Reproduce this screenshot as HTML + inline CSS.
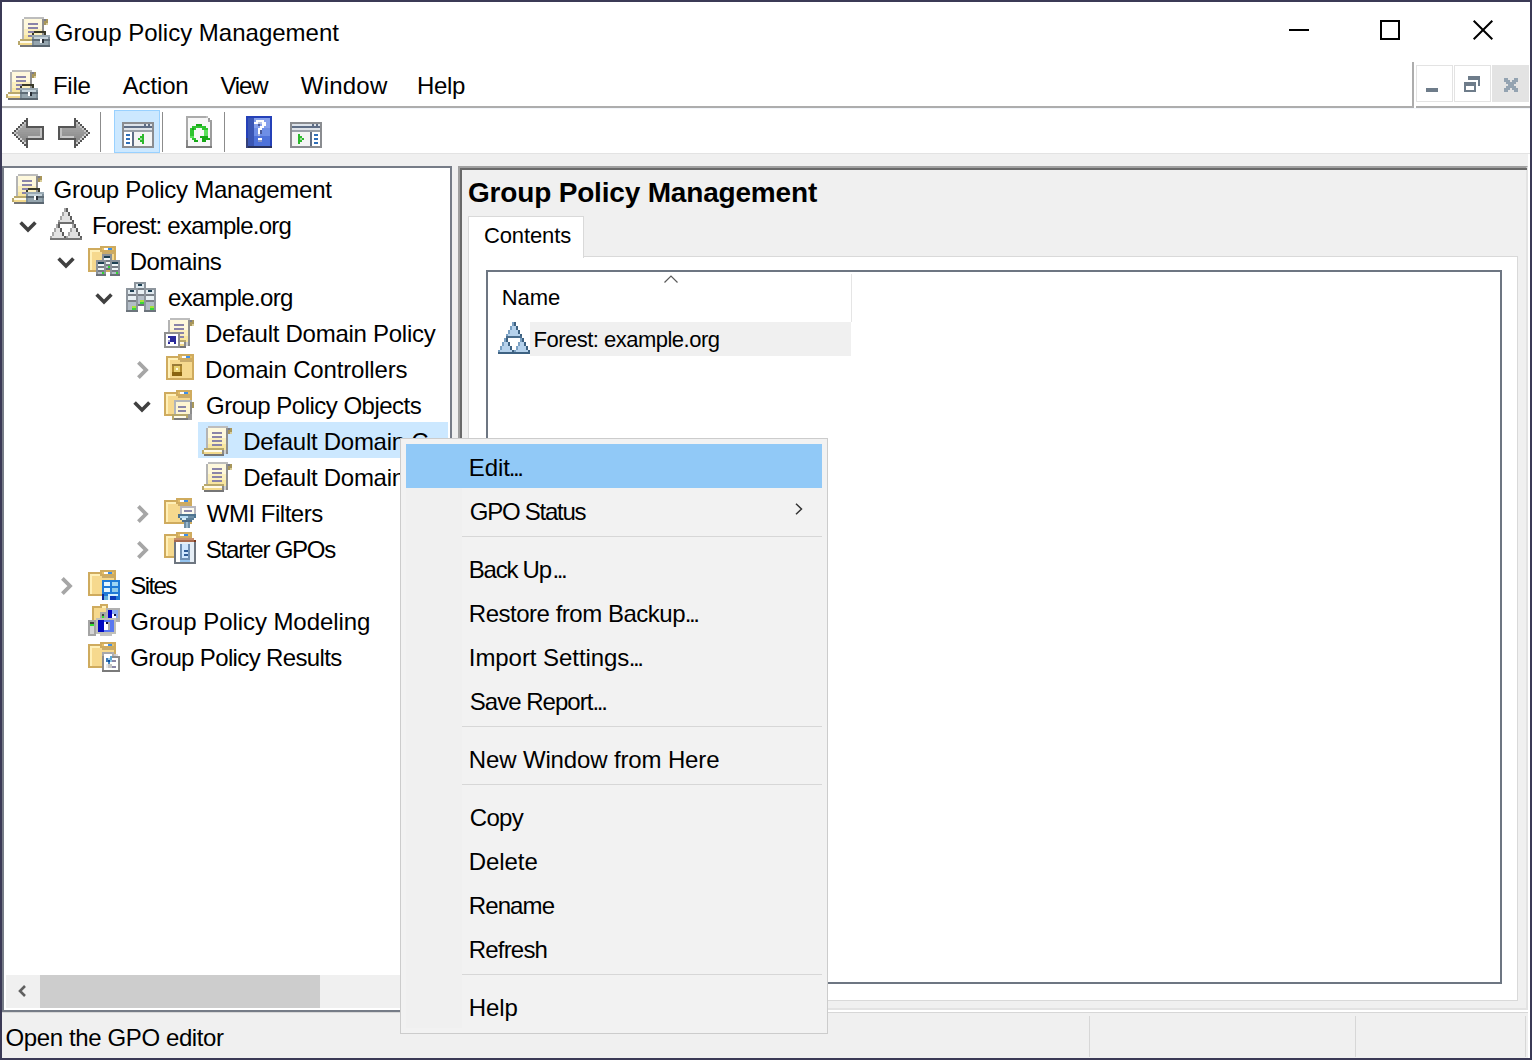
<!DOCTYPE html>
<html><head><meta charset="utf-8">
<style>
*{margin:0;padding:0;box-sizing:border-box}
html,body{width:1532px;height:1060px;overflow:hidden;background:#fff}
body{position:relative;font-family:"Liberation Sans",sans-serif;color:#000}
.a{position:absolute}
.t{position:absolute;font-size:24px;line-height:24px;white-space:nowrap}
svg{position:absolute;overflow:visible}
</style></head><body>

<svg style="left:18px;top:15px" width="32" height="32" viewBox="0 0 16 16" shape-rendering="crispEdges"><rect x="3" y="1" width="10" height="1" fill="#bdbdbd"/><rect x="2" y="2" width="1" height="11" fill="#b4b4b4"/><rect x="3" y="2" width="9" height="11" fill="#fef8dc"/><rect x="3" y="7" width="9" height="6" fill="#fbefbe"/><rect x="3" y="10" width="9" height="3" fill="#f8e6a0"/><rect x="12" y="2" width="1" height="12" fill="#8e8e8e"/><rect x="13" y="2" width="2" height="3" fill="#a8965a"/><rect x="13" y="2" width="1" height="1" fill="#7c7c86"/><rect x="14" y="4" width="1" height="1" fill="#d8cc98"/><rect x="5" y="4" width="5" height="1" fill="#8a84a8"/><rect x="5" y="6" width="5" height="1" fill="#8a84a8"/><rect x="5" y="8" width="5" height="1" fill="#8a84a8"/><rect x="5" y="10" width="5" height="1" fill="#8a84a8"/><rect x="1" y="12" width="10" height="1" fill="#b9a86c"/><rect x="0" y="13" width="1" height="2" fill="#b9a86c"/><rect x="1" y="13" width="9" height="1" fill="#fffbea"/><rect x="1" y="14" width="9" height="1" fill="#f2d98c"/><rect x="10" y="13" width="1" height="2" fill="#8a8a8a"/><rect x="11" y="13" width="1" height="2" fill="#d0d0d0"/><rect x="12" y="14" width="1" height="1" fill="#8a8a8a"/><rect x="1" y="15" width="10" height="1" fill="#767676"/><rect x="8" y="8" width="6" height="1" fill="#3a3a2a"/><rect x="7" y="9" width="1" height="1" fill="#3a3a2a"/><rect x="13" y="9" width="1" height="1" fill="#3a3a2a"/><rect x="7" y="10" width="9" height="6" fill="#7d8d98"/><rect x="7" y="10" width="9" height="1" fill="#9aaab4"/><rect x="8" y="11" width="7" height="1" fill="#c4d2da"/><rect x="7" y="12" width="9" height="1" fill="#5e6c76"/><rect x="8" y="13" width="7" height="2" fill="#95a5ae"/><rect x="11" y="12" width="1" height="2" fill="#ffffff"/><rect x="12" y="12" width="1" height="2" fill="#2a3038"/><rect x="7" y="15" width="9" height="1" fill="#5a6670"/></svg>
<div class="t" style="left:54.8px;top:21px;">Group Policy Management</div>
<div class="a" style="left:1289px;top:29px;width:20px;height:2px;background:#000"></div>
<div class="a" style="left:1380px;top:20px;width:20px;height:20px;border:2px solid #000"></div>
<svg style="left:1473px;top:20px" width="20" height="20" viewBox="0 0 20 20"><path d="M0.7 0.7L19.3 19.3M19.3 0.7L0.7 19.3" stroke="#000" stroke-width="2"/></svg>
<svg style="left:6px;top:68px" width="32" height="32" viewBox="0 0 16 16" shape-rendering="crispEdges"><rect x="3" y="1" width="10" height="1" fill="#bdbdbd"/><rect x="2" y="2" width="1" height="11" fill="#b4b4b4"/><rect x="3" y="2" width="9" height="11" fill="#fef8dc"/><rect x="3" y="7" width="9" height="6" fill="#fbefbe"/><rect x="3" y="10" width="9" height="3" fill="#f8e6a0"/><rect x="12" y="2" width="1" height="12" fill="#8e8e8e"/><rect x="13" y="2" width="2" height="3" fill="#a8965a"/><rect x="13" y="2" width="1" height="1" fill="#7c7c86"/><rect x="14" y="4" width="1" height="1" fill="#d8cc98"/><rect x="5" y="4" width="5" height="1" fill="#8a84a8"/><rect x="5" y="6" width="5" height="1" fill="#8a84a8"/><rect x="5" y="8" width="5" height="1" fill="#8a84a8"/><rect x="5" y="10" width="5" height="1" fill="#8a84a8"/><rect x="1" y="12" width="10" height="1" fill="#b9a86c"/><rect x="0" y="13" width="1" height="2" fill="#b9a86c"/><rect x="1" y="13" width="9" height="1" fill="#fffbea"/><rect x="1" y="14" width="9" height="1" fill="#f2d98c"/><rect x="10" y="13" width="1" height="2" fill="#8a8a8a"/><rect x="11" y="13" width="1" height="2" fill="#d0d0d0"/><rect x="12" y="14" width="1" height="1" fill="#8a8a8a"/><rect x="1" y="15" width="10" height="1" fill="#767676"/><rect x="8" y="8" width="6" height="1" fill="#3a3a2a"/><rect x="7" y="9" width="1" height="1" fill="#3a3a2a"/><rect x="13" y="9" width="1" height="1" fill="#3a3a2a"/><rect x="7" y="10" width="9" height="6" fill="#7d8d98"/><rect x="7" y="10" width="9" height="1" fill="#9aaab4"/><rect x="8" y="11" width="7" height="1" fill="#c4d2da"/><rect x="7" y="12" width="9" height="1" fill="#5e6c76"/><rect x="8" y="13" width="7" height="2" fill="#95a5ae"/><rect x="11" y="12" width="1" height="2" fill="#ffffff"/><rect x="12" y="12" width="1" height="2" fill="#2a3038"/><rect x="7" y="15" width="9" height="1" fill="#5a6670"/></svg>
<div class="t" style="left:52.9px;top:74px;letter-spacing:-0.2px;">File</div>
<div class="t" style="left:122.7px;top:74px;letter-spacing:-0.14px;">Action</div>
<div class="t" style="left:220.4px;top:74px;letter-spacing:-1.17px;">View</div>
<div class="t" style="left:300.8px;top:74px;letter-spacing:0.22px;">Window</div>
<div class="t" style="left:417.1px;top:74px;letter-spacing:-0.37px;">Help</div>
<div class="a" style="left:2px;top:106px;width:1412px;height:2px;background:#adadad"></div>
<div class="a" style="left:1412px;top:62px;width:2px;height:46px;background:#adadad"></div>
<div class="a" style="left:1416px;top:106px;width:1114px;height:2px;background:#adadad"></div>
<div class="a" style="left:2px;top:108px;width:1528px;height:1px;background:#f3f6fb"></div>
<div class="a" style="left:1416px;top:65px;width:37px;height:37px;border:1px solid #e3e3e3"></div>
<div class="a" style="left:1426px;top:88px;width:12px;height:4px;background:#6e7c8a"></div>
<div class="a" style="left:1454px;top:65px;width:37px;height:37px;border:1px solid #e3e3e3"></div>
<div class="a" style="left:1468px;top:76px;width:12px;height:10px;border-top:4px solid #6e7c8a;border-right:2px solid #6e7c8a"></div>
<div class="a" style="left:1464px;top:82px;width:12px;height:10px;border:2px solid #6e7c8a;border-top-width:4px;background:#fff"></div>
<div class="a" style="left:1492px;top:65px;width:37px;height:37px;background:#e3e3e3"></div>
<svg style="left:1504px;top:78px" width="14" height="14" viewBox="0 0 14 14" shape-rendering="crispEdges"><g fill="#94a3b1"><rect x="0" y="0" width="4" height="4"/><rect x="10" y="0" width="4" height="4"/><rect x="0" y="10" width="4" height="4"/><rect x="10" y="10" width="4" height="4"/><rect x="2" y="2" width="4" height="4"/><rect x="8" y="2" width="4" height="4"/><rect x="2" y="8" width="4" height="4"/><rect x="8" y="8" width="4" height="4"/><rect x="4" y="4" width="6" height="6"/></g></svg>
<div class="a" style="left:2px;top:153px;width:1528px;height:1px;background:#e3e3e3"></div>
<div class="a" style="left:2px;top:154px;width:1528px;height:904px;background:#f0f0f0"></div>
<div class="a" style="left:114px;top:110px;width:46px;height:43px;background:#cce8ff;border:1px solid #99d1ff"></div>
<div class="a" style="left:100px;top:112px;width:1px;height:40px;background:#8c8c8c"></div>
<div class="a" style="left:162px;top:112px;width:1px;height:40px;background:#8c8c8c"></div>
<div class="a" style="left:224px;top:112px;width:1px;height:40px;background:#8c8c8c"></div>
<svg style="left:12px;top:118px" width="32" height="30" viewBox="0 0 16 15" shape-rendering="crispEdges"><rect x="7" y="0" width="1" height="1" fill="#b4b4b4"/><rect x="7" y="0" width="1" height="1" fill="#555555"/><rect x="6" y="1" width="2" height="1" fill="#b0b0b0"/><rect x="6" y="1" width="1" height="1" fill="#555555"/><rect x="7" y="1" width="1" height="1" fill="#c4c4c4"/><rect x="5" y="2" width="3" height="1" fill="#acacac"/><rect x="5" y="2" width="1" height="1" fill="#555555"/><rect x="6" y="2" width="1" height="1" fill="#c4c4c4"/><rect x="4" y="3" width="4" height="1" fill="#a8a8a8"/><rect x="4" y="3" width="1" height="1" fill="#555555"/><rect x="5" y="3" width="1" height="1" fill="#c4c4c4"/><rect x="3" y="4" width="13" height="1" fill="#a4a4a4"/><rect x="3" y="4" width="1" height="1" fill="#555555"/><rect x="4" y="4" width="1" height="1" fill="#c4c4c4"/><rect x="2" y="5" width="14" height="1" fill="#a0a0a0"/><rect x="2" y="5" width="1" height="1" fill="#555555"/><rect x="3" y="5" width="1" height="1" fill="#c4c4c4"/><rect x="1" y="6" width="15" height="1" fill="#9c9c9c"/><rect x="1" y="6" width="1" height="1" fill="#555555"/><rect x="2" y="6" width="1" height="1" fill="#c4c4c4"/><rect x="0" y="7" width="16" height="1" fill="#989898"/><rect x="0" y="7" width="1" height="1" fill="#555555"/><rect x="1" y="7" width="1" height="1" fill="#c4c4c4"/><rect x="1" y="8" width="15" height="1" fill="#949494"/><rect x="1" y="8" width="1" height="1" fill="#555555"/><rect x="2" y="8" width="1" height="1" fill="#d0d0d0"/><rect x="2" y="9" width="14" height="1" fill="#909090"/><rect x="2" y="9" width="1" height="1" fill="#555555"/><rect x="3" y="9" width="1" height="1" fill="#d0d0d0"/><rect x="3" y="10" width="13" height="1" fill="#8c8c8c"/><rect x="3" y="10" width="1" height="1" fill="#555555"/><rect x="4" y="10" width="1" height="1" fill="#d0d0d0"/><rect x="4" y="11" width="4" height="1" fill="#888888"/><rect x="4" y="11" width="1" height="1" fill="#555555"/><rect x="5" y="11" width="1" height="1" fill="#d0d0d0"/><rect x="5" y="12" width="3" height="1" fill="#848484"/><rect x="5" y="12" width="1" height="1" fill="#555555"/><rect x="6" y="12" width="1" height="1" fill="#d0d0d0"/><rect x="6" y="13" width="2" height="1" fill="#808080"/><rect x="6" y="13" width="1" height="1" fill="#555555"/><rect x="7" y="13" width="1" height="1" fill="#d0d0d0"/><rect x="7" y="14" width="1" height="1" fill="#7c7c7c"/><rect x="7" y="14" width="1" height="1" fill="#555555"/><rect x="7" y="0" width="1" height="1" fill="#555555"/><rect x="7" y="1" width="1" height="1" fill="#555555"/><rect x="7" y="2" width="1" height="1" fill="#555555"/><rect x="7" y="3" width="1" height="1" fill="#555555"/><rect x="7" y="4" width="1" height="1" fill="#555555"/><rect x="7" y="10" width="1" height="1" fill="#555555"/><rect x="7" y="11" width="1" height="1" fill="#555555"/><rect x="7" y="12" width="1" height="1" fill="#555555"/><rect x="7" y="13" width="1" height="1" fill="#555555"/><rect x="7" y="14" width="1" height="1" fill="#555555"/><rect x="8" y="4" width="8" height="1" fill="#555555"/><rect x="8" y="10" width="8" height="1" fill="#555555"/><rect x="15" y="4" width="1" height="7" fill="#555555"/><rect x="8" y="9" width="7" height="1" fill="#c8c8c8"/><rect x="14" y="5" width="1" height="5" fill="#c0c0c0"/></svg><svg style="left:58px;top:118px" width="32" height="30" viewBox="0 0 16 15" shape-rendering="crispEdges"><rect x="8" y="0" width="1" height="1" fill="#b4b4b4"/><rect x="8" y="0" width="1" height="1" fill="#555555"/><rect x="8" y="1" width="2" height="1" fill="#b0b0b0"/><rect x="9" y="1" width="1" height="1" fill="#555555"/><rect x="8" y="1" width="1" height="1" fill="#c4c4c4"/><rect x="8" y="2" width="3" height="1" fill="#acacac"/><rect x="10" y="2" width="1" height="1" fill="#555555"/><rect x="9" y="2" width="1" height="1" fill="#c4c4c4"/><rect x="8" y="3" width="4" height="1" fill="#a8a8a8"/><rect x="11" y="3" width="1" height="1" fill="#555555"/><rect x="10" y="3" width="1" height="1" fill="#c4c4c4"/><rect x="0" y="4" width="13" height="1" fill="#a4a4a4"/><rect x="12" y="4" width="1" height="1" fill="#555555"/><rect x="11" y="4" width="1" height="1" fill="#c4c4c4"/><rect x="0" y="5" width="14" height="1" fill="#a0a0a0"/><rect x="13" y="5" width="1" height="1" fill="#555555"/><rect x="12" y="5" width="1" height="1" fill="#c4c4c4"/><rect x="0" y="6" width="15" height="1" fill="#9c9c9c"/><rect x="14" y="6" width="1" height="1" fill="#555555"/><rect x="13" y="6" width="1" height="1" fill="#c4c4c4"/><rect x="0" y="7" width="16" height="1" fill="#989898"/><rect x="15" y="7" width="1" height="1" fill="#555555"/><rect x="14" y="7" width="1" height="1" fill="#c4c4c4"/><rect x="0" y="8" width="15" height="1" fill="#949494"/><rect x="14" y="8" width="1" height="1" fill="#555555"/><rect x="13" y="8" width="1" height="1" fill="#d0d0d0"/><rect x="0" y="9" width="14" height="1" fill="#909090"/><rect x="13" y="9" width="1" height="1" fill="#555555"/><rect x="12" y="9" width="1" height="1" fill="#d0d0d0"/><rect x="0" y="10" width="13" height="1" fill="#8c8c8c"/><rect x="12" y="10" width="1" height="1" fill="#555555"/><rect x="11" y="10" width="1" height="1" fill="#d0d0d0"/><rect x="8" y="11" width="4" height="1" fill="#888888"/><rect x="11" y="11" width="1" height="1" fill="#555555"/><rect x="10" y="11" width="1" height="1" fill="#d0d0d0"/><rect x="8" y="12" width="3" height="1" fill="#848484"/><rect x="10" y="12" width="1" height="1" fill="#555555"/><rect x="9" y="12" width="1" height="1" fill="#d0d0d0"/><rect x="8" y="13" width="2" height="1" fill="#808080"/><rect x="9" y="13" width="1" height="1" fill="#555555"/><rect x="8" y="13" width="1" height="1" fill="#d0d0d0"/><rect x="8" y="14" width="1" height="1" fill="#7c7c7c"/><rect x="8" y="14" width="1" height="1" fill="#555555"/><rect x="8" y="0" width="1" height="1" fill="#555555"/><rect x="8" y="1" width="1" height="1" fill="#555555"/><rect x="8" y="2" width="1" height="1" fill="#555555"/><rect x="8" y="3" width="1" height="1" fill="#555555"/><rect x="8" y="4" width="1" height="1" fill="#555555"/><rect x="8" y="10" width="1" height="1" fill="#555555"/><rect x="8" y="11" width="1" height="1" fill="#555555"/><rect x="8" y="12" width="1" height="1" fill="#555555"/><rect x="8" y="13" width="1" height="1" fill="#555555"/><rect x="8" y="14" width="1" height="1" fill="#555555"/><rect x="0" y="4" width="8" height="1" fill="#555555"/><rect x="0" y="10" width="8" height="1" fill="#555555"/><rect x="0" y="4" width="1" height="7" fill="#555555"/><rect x="1" y="9" width="7" height="1" fill="#c8c8c8"/><rect x="1" y="5" width="1" height="5" fill="#c0c0c0"/></svg><svg style="left:122px;top:122px" width="32" height="26" viewBox="0 0 16 13" shape-rendering="crispEdges"><rect x="0" y="0" width="16" height="13" fill="#8a8c90"/><rect x="1" y="1" width="14" height="11" fill="#f4f4f4"/><rect x="1" y="1" width="14" height="1" fill="#dde3ea"/><rect x="1" y="2" width="14" height="1" fill="#5f6e86"/><rect x="1" y="3" width="14" height="1" fill="#dfe3e8"/><rect x="1" y="4" width="14" height="1" fill="#9aa0a8"/><rect x="11" y="1" width="1" height="1" fill="#5f6e86"/><rect x="13" y="1" width="1" height="1" fill="#5f6e86"/><rect x="1" y="5" width="5" height="7" fill="#ffffff"/><rect x="5" y="5" width="1" height="7" fill="#5f6e86"/><rect x="2" y="6" width="2" height="1" fill="#2f6fb8"/><rect x="2" y="8" width="2" height="1" fill="#2f6fb8"/><rect x="2" y="10" width="2" height="1" fill="#2f6fb8"/><rect x="10" y="6" width="1" height="5" fill="#2cb82c"/><rect x="9" y="7" width="1" height="3" fill="#2cb82c"/><rect x="8" y="8" width="1" height="1" fill="#2cb82c"/><rect x="9" y="8" width="1" height="1" fill="#9ae09a"/></svg><svg style="left:186px;top:116px" width="26" height="32" viewBox="0 0 13 16" shape-rendering="crispEdges"><rect x="0" y="0" width="13" height="16" fill="#ababab"/><rect x="1" y="1" width="11" height="14" fill="#f7f7f7"/><rect x="11" y="0" width="2" height="3" fill="#ffffff"/><rect x="10" y="0" width="1" height="1" fill="#c0c0c0"/><rect x="11" y="1" width="1" height="1" fill="#9a9a9a"/><rect x="11" y="2" width="2" height="1" fill="#a0a0a0"/><rect x="12" y="3" width="1" height="12" fill="#9c9c9c"/><rect x="0" y="12" width="1" height="4" fill="#8a8a8a"/><rect x="0" y="15" width="13" height="1" fill="#7a7a7a"/><rect x="5" y="4" width="3" height="1" fill="#16a816"/><rect x="3" y="5" width="7" height="1" fill="#2fc42f"/><rect x="2" y="6" width="3" height="1" fill="#2fc42f"/><rect x="8" y="6" width="3" height="1" fill="#2fc42f"/><rect x="3" y="6" width="1" height="1" fill="#16a816"/><rect x="2" y="7" width="2" height="3" fill="#2fc42f"/><rect x="9" y="7" width="2" height="3" fill="#5ae05a"/><rect x="2" y="10" width="2" height="1" fill="#5ae05a"/><rect x="7" y="10" width="4" height="1" fill="#16a816"/><rect x="3" y="11" width="2" height="1" fill="#2fc42f"/><rect x="8" y="11" width="4" height="1" fill="#16a816"/><rect x="4" y="12" width="2" height="1" fill="#16a816"/><rect x="8" y="12" width="2" height="1" fill="#16a816"/></svg><svg style="left:246px;top:116px" width="26" height="32" viewBox="0 0 13 16" shape-rendering="crispEdges"><rect x="0" y="0" width="13" height="16" fill="#2440b8"/><rect x="1" y="1" width="3" height="14" fill="#3a56b4"/><rect x="4" y="1" width="8" height="14" fill="#6e8ee6"/><rect x="4" y="1" width="8" height="5" fill="#86a0ec"/><rect x="4" y="10" width="8" height="5" fill="#4e72da"/><rect x="0" y="15" width="13" height="1" fill="#28325e"/><rect x="0" y="11" width="1" height="5" fill="#34407a"/><rect x="5" y="2" width="4" height="1" fill="#ffffff"/><rect x="4" y="3" width="2" height="1" fill="#ffffff"/><rect x="8" y="3" width="2" height="1" fill="#ffffff"/><rect x="8" y="4" width="2" height="1" fill="#ffffff"/><rect x="6" y="3" width="2" height="1" fill="#b8c4e8"/><rect x="6" y="4" width="1" height="1" fill="#4a5a9a"/><rect x="7" y="5" width="2" height="1" fill="#ffffff"/><rect x="6" y="6" width="2" height="1" fill="#ffffff"/><rect x="6" y="7" width="1" height="2" fill="#ffffff"/><rect x="7" y="7" width="1" height="2" fill="#4a5a9a"/><rect x="6" y="9" width="1" height="1" fill="#aab4d8"/><rect x="6" y="11" width="2" height="1" fill="#ffffff"/><rect x="6" y="12" width="2" height="1" fill="#8a96c4"/></svg><svg style="left:290px;top:122px" width="32" height="26" viewBox="0 0 16 13" shape-rendering="crispEdges"><rect x="0" y="0" width="16" height="13" fill="#8a8c90"/><rect x="1" y="1" width="14" height="11" fill="#f4f4f4"/><rect x="1" y="1" width="14" height="1" fill="#dde3ea"/><rect x="1" y="2" width="14" height="1" fill="#5f6e86"/><rect x="1" y="3" width="14" height="1" fill="#dfe3e8"/><rect x="1" y="4" width="14" height="1" fill="#9aa0a8"/><rect x="11" y="1" width="1" height="1" fill="#5f6e86"/><rect x="13" y="1" width="1" height="1" fill="#5f6e86"/><rect x="10" y="5" width="5" height="7" fill="#ffffff"/><rect x="10" y="5" width="1" height="7" fill="#5f6e86"/><rect x="12" y="6" width="2" height="1" fill="#2f6fb8"/><rect x="12" y="8" width="2" height="1" fill="#2f6fb8"/><rect x="12" y="10" width="2" height="1" fill="#2f6fb8"/><rect x="4" y="6" width="1" height="5" fill="#2cb82c"/><rect x="5" y="7" width="1" height="3" fill="#2cb82c"/><rect x="6" y="8" width="1" height="1" fill="#2cb82c"/><rect x="5" y="8" width="1" height="1" fill="#9ae09a"/></svg>
<div class="a" style="left:2px;top:166px;width:450px;height:846px;background:#fff;border:2px solid #767c87"></div>
<div class="a" style="left:198px;top:422px;width:250px;height:36px;background:#cce8ff"></div>
<div class="a" style="left:4px;top:168px;width:446px;height:806px;overflow:hidden">
<svg style="left:8px;top:4px" width="32" height="32" viewBox="0 0 16 16" shape-rendering="crispEdges"><rect x="3" y="1" width="10" height="1" fill="#bdbdbd"/><rect x="2" y="2" width="1" height="11" fill="#b4b4b4"/><rect x="3" y="2" width="9" height="11" fill="#fef8dc"/><rect x="3" y="7" width="9" height="6" fill="#fbefbe"/><rect x="3" y="10" width="9" height="3" fill="#f8e6a0"/><rect x="12" y="2" width="1" height="12" fill="#8e8e8e"/><rect x="13" y="2" width="2" height="3" fill="#a8965a"/><rect x="13" y="2" width="1" height="1" fill="#7c7c86"/><rect x="14" y="4" width="1" height="1" fill="#d8cc98"/><rect x="5" y="4" width="5" height="1" fill="#8a84a8"/><rect x="5" y="6" width="5" height="1" fill="#8a84a8"/><rect x="5" y="8" width="5" height="1" fill="#8a84a8"/><rect x="5" y="10" width="5" height="1" fill="#8a84a8"/><rect x="1" y="12" width="10" height="1" fill="#b9a86c"/><rect x="0" y="13" width="1" height="2" fill="#b9a86c"/><rect x="1" y="13" width="9" height="1" fill="#fffbea"/><rect x="1" y="14" width="9" height="1" fill="#f2d98c"/><rect x="10" y="13" width="1" height="2" fill="#8a8a8a"/><rect x="11" y="13" width="1" height="2" fill="#d0d0d0"/><rect x="12" y="14" width="1" height="1" fill="#8a8a8a"/><rect x="1" y="15" width="10" height="1" fill="#767676"/><rect x="8" y="8" width="6" height="1" fill="#3a3a2a"/><rect x="7" y="9" width="1" height="1" fill="#3a3a2a"/><rect x="13" y="9" width="1" height="1" fill="#3a3a2a"/><rect x="7" y="10" width="9" height="6" fill="#7d8d98"/><rect x="7" y="10" width="9" height="1" fill="#9aaab4"/><rect x="8" y="11" width="7" height="1" fill="#c4d2da"/><rect x="7" y="12" width="9" height="1" fill="#5e6c76"/><rect x="8" y="13" width="7" height="2" fill="#95a5ae"/><rect x="11" y="12" width="1" height="2" fill="#ffffff"/><rect x="12" y="12" width="1" height="2" fill="#2a3038"/><rect x="7" y="15" width="9" height="1" fill="#5a6670"/></svg>
<div class="t" style="left:49.5px;top:10px;letter-spacing:-0.26px">Group Policy Management</div>
<svg style="left:46px;top:40px" width="32" height="32" viewBox="0 0 16 16" shape-rendering="crispEdges"><rect x="7" y="0" width="2" height="1" fill="#e2e2e2"/><rect x="7" y="0" width="1" height="1" fill="#a6a6a6"/><rect x="8" y="0" width="1" height="1" fill="#5e5e5e"/><rect x="7" y="1" width="2" height="1" fill="#e2e2e2"/><rect x="7" y="1" width="1" height="1" fill="#a6a6a6"/><rect x="8" y="1" width="1" height="1" fill="#5e5e5e"/><rect x="6" y="2" width="4" height="1" fill="#e2e2e2"/><rect x="6" y="2" width="1" height="1" fill="#a6a6a6"/><rect x="9" y="2" width="1" height="1" fill="#5e5e5e"/><rect x="6" y="3" width="4" height="1" fill="#e2e2e2"/><rect x="6" y="3" width="1" height="1" fill="#a6a6a6"/><rect x="9" y="3" width="1" height="1" fill="#5e5e5e"/><rect x="5" y="4" width="6" height="1" fill="#e2e2e2"/><rect x="5" y="4" width="1" height="1" fill="#a6a6a6"/><rect x="10" y="4" width="1" height="1" fill="#5e5e5e"/><rect x="5" y="5" width="6" height="1" fill="#e2e2e2"/><rect x="5" y="5" width="1" height="1" fill="#a6a6a6"/><rect x="10" y="5" width="1" height="1" fill="#5e5e5e"/><rect x="4" y="6" width="8" height="1" fill="#e2e2e2"/><rect x="4" y="6" width="1" height="1" fill="#a6a6a6"/><rect x="11" y="6" width="1" height="1" fill="#5e5e5e"/><rect x="4" y="7" width="8" height="1" fill="#e2e2e2"/><rect x="4" y="7" width="1" height="1" fill="#a6a6a6"/><rect x="11" y="7" width="1" height="1" fill="#5e5e5e"/><rect x="3" y="8" width="10" height="1" fill="#e2e2e2"/><rect x="3" y="8" width="1" height="1" fill="#a6a6a6"/><rect x="12" y="8" width="1" height="1" fill="#5e5e5e"/><rect x="3" y="9" width="10" height="1" fill="#e2e2e2"/><rect x="3" y="9" width="1" height="1" fill="#a6a6a6"/><rect x="12" y="9" width="1" height="1" fill="#5e5e5e"/><rect x="2" y="10" width="12" height="1" fill="#e2e2e2"/><rect x="2" y="10" width="1" height="1" fill="#a6a6a6"/><rect x="13" y="10" width="1" height="1" fill="#5e5e5e"/><rect x="2" y="11" width="12" height="1" fill="#e2e2e2"/><rect x="2" y="11" width="1" height="1" fill="#a6a6a6"/><rect x="13" y="11" width="1" height="1" fill="#5e5e5e"/><rect x="1" y="12" width="14" height="1" fill="#e2e2e2"/><rect x="1" y="12" width="1" height="1" fill="#a6a6a6"/><rect x="14" y="12" width="1" height="1" fill="#5e5e5e"/><rect x="1" y="13" width="14" height="1" fill="#e2e2e2"/><rect x="1" y="13" width="1" height="1" fill="#a6a6a6"/><rect x="14" y="13" width="1" height="1" fill="#5e5e5e"/><rect x="0" y="14" width="16" height="1" fill="#e2e2e2"/><rect x="0" y="14" width="1" height="1" fill="#a6a6a6"/><rect x="15" y="14" width="1" height="1" fill="#5e5e5e"/><rect x="0" y="15" width="16" height="1" fill="#e2e2e2"/><rect x="0" y="15" width="1" height="1" fill="#a6a6a6"/><rect x="15" y="15" width="1" height="1" fill="#5e5e5e"/><rect x="4" y="7" width="8" height="1" fill="#6e6e6e"/><rect x="5" y="8" width="6" height="1" fill="#ffffff"/><rect x="5" y="9" width="6" height="1" fill="#ffffff"/><rect x="6" y="10" width="4" height="1" fill="#ffffff"/><rect x="6" y="11" width="4" height="1" fill="#ffffff"/><rect x="7" y="12" width="2" height="1" fill="#ffffff"/><rect x="7" y="13" width="2" height="1" fill="#ffffff"/><rect x="4" y="8" width="1" height="1" fill="#5e5e5e"/><rect x="11" y="8" width="1" height="1" fill="#a6a6a6"/><rect x="4" y="9" width="1" height="1" fill="#5e5e5e"/><rect x="11" y="9" width="1" height="1" fill="#a6a6a6"/><rect x="5" y="10" width="1" height="1" fill="#5e5e5e"/><rect x="10" y="10" width="1" height="1" fill="#a6a6a6"/><rect x="5" y="11" width="1" height="1" fill="#5e5e5e"/><rect x="10" y="11" width="1" height="1" fill="#a6a6a6"/><rect x="6" y="12" width="1" height="1" fill="#5e5e5e"/><rect x="9" y="12" width="1" height="1" fill="#a6a6a6"/><rect x="6" y="13" width="1" height="1" fill="#5e5e5e"/><rect x="9" y="13" width="1" height="1" fill="#a6a6a6"/><rect x="7" y="14" width="1" height="1" fill="#5e5e5e"/><rect x="8" y="14" width="1" height="1" fill="#a6a6a6"/><rect x="0" y="15" width="16" height="1" fill="#767676"/></svg>
<svg style="left:15px;top:52.69999999999999px" width="18" height="11" viewBox="0 0 18 11"><path d="M1.6 1.6L9 9L16.4 1.6" fill="none" stroke="#404040" stroke-width="3.6"/></svg>
<div class="t" style="left:88.1px;top:46px;letter-spacing:-0.76px">Forest: example.org</div>
<svg style="left:84px;top:76px" width="32" height="32" viewBox="0 0 16 16" shape-rendering="crispEdges"><rect x="0" y="2" width="14" height="12" fill="#cfab5e"/><rect x="1" y="3" width="12" height="10" fill="#f6d98e"/><rect x="1" y="3" width="1" height="10" fill="#fff0b8"/><rect x="1" y="3" width="5" height="1" fill="#fff0b8"/><rect x="6" y="1" width="8" height="3" fill="#cfab5e"/><rect x="7" y="2" width="6" height="1" fill="#e6c06a"/><rect x="8" y="2" width="2" height="1" fill="#ffffff"/><rect x="10" y="2" width="2" height="1" fill="#3d8ee8"/><rect x="7" y="4" width="6" height="1" fill="#c9ab6a"/><rect x="7" y="5" width="5" height="8" fill="#8a929a"/><rect x="8" y="6" width="3" height="6" fill="#c4ccd4"/><rect x="8" y="6" width="3" height="1" fill="#1d4052"/><rect x="8" y="7" width="3" height="1" fill="#f0f6f8"/><rect x="8" y="8" width="3" height="1" fill="#767c84"/><rect x="8" y="9" width="3" height="1" fill="#eef4f6"/><rect x="8" y="10" width="3" height="1" fill="#767c84"/><rect x="8" y="11" width="3" height="1" fill="#b4bec8"/><rect x="10" y="11" width="1" height="1" fill="#30d830"/><rect x="7" y="12" width="5" height="1" fill="#6a7078"/><rect x="4" y="8" width="5" height="8" fill="#8a929a"/><rect x="5" y="9" width="3" height="6" fill="#c4ccd4"/><rect x="5" y="9" width="3" height="1" fill="#1d4052"/><rect x="5" y="10" width="3" height="1" fill="#f0f6f8"/><rect x="5" y="11" width="3" height="1" fill="#767c84"/><rect x="5" y="12" width="3" height="1" fill="#eef4f6"/><rect x="5" y="13" width="3" height="1" fill="#767c84"/><rect x="5" y="14" width="3" height="1" fill="#b4bec8"/><rect x="7" y="14" width="1" height="1" fill="#30d830"/><rect x="4" y="15" width="5" height="1" fill="#6a7078"/><rect x="11" y="8" width="5" height="8" fill="#8a929a"/><rect x="12" y="9" width="3" height="6" fill="#c4ccd4"/><rect x="12" y="9" width="3" height="1" fill="#1d4052"/><rect x="12" y="10" width="3" height="1" fill="#f0f6f8"/><rect x="12" y="11" width="3" height="1" fill="#767c84"/><rect x="12" y="12" width="3" height="1" fill="#eef4f6"/><rect x="12" y="13" width="3" height="1" fill="#767c84"/><rect x="12" y="14" width="3" height="1" fill="#b4bec8"/><rect x="14" y="14" width="1" height="1" fill="#30d830"/><rect x="11" y="15" width="5" height="1" fill="#6a7078"/></svg>
<svg style="left:53px;top:88.69999999999999px" width="18" height="11" viewBox="0 0 18 11"><path d="M1.6 1.6L9 9L16.4 1.6" fill="none" stroke="#404040" stroke-width="3.6"/></svg>
<div class="t" style="left:125.69999999999999px;top:82px;letter-spacing:-0.42px">Domains</div>
<svg style="left:122px;top:112px" width="32" height="32" viewBox="0 0 16 16" shape-rendering="crispEdges"><rect x="4" y="1" width="6" height="12" fill="#8d959d"/><rect x="5" y="2" width="4" height="10" fill="#c9d1d8"/><rect x="5" y="2" width="4" height="2" fill="#dfe9ef"/><rect x="6" y="2" width="2" height="1" fill="#1d3f52"/><rect x="5" y="4" width="4" height="1" fill="#7a8088"/><rect x="5" y="5" width="4" height="2" fill="#e8f0f4"/><rect x="5" y="7" width="4" height="1" fill="#7a8088"/><rect x="5" y="8" width="4" height="4" fill="#b2bcc6"/><rect x="7" y="10" width="2" height="2" fill="#3ad83a"/><rect x="7" y="10" width="2" height="1" fill="#a8e040"/><rect x="4" y="12" width="6" height="1" fill="#6c747c"/><rect x="0" y="4" width="6" height="12" fill="#8d959d"/><rect x="1" y="5" width="4" height="10" fill="#c9d1d8"/><rect x="1" y="5" width="4" height="2" fill="#dfe9ef"/><rect x="2" y="5" width="2" height="1" fill="#1d3f52"/><rect x="1" y="7" width="4" height="1" fill="#7a8088"/><rect x="1" y="8" width="4" height="2" fill="#e8f0f4"/><rect x="1" y="10" width="4" height="1" fill="#7a8088"/><rect x="1" y="11" width="4" height="4" fill="#b2bcc6"/><rect x="3" y="13" width="2" height="2" fill="#3ad83a"/><rect x="3" y="13" width="2" height="1" fill="#a8e040"/><rect x="0" y="15" width="6" height="1" fill="#6c747c"/><rect x="9" y="4" width="6" height="12" fill="#8d959d"/><rect x="10" y="5" width="4" height="10" fill="#c9d1d8"/><rect x="10" y="5" width="4" height="2" fill="#dfe9ef"/><rect x="11" y="5" width="2" height="1" fill="#1d3f52"/><rect x="10" y="7" width="4" height="1" fill="#7a8088"/><rect x="10" y="8" width="4" height="2" fill="#e8f0f4"/><rect x="10" y="10" width="4" height="1" fill="#7a8088"/><rect x="10" y="11" width="4" height="4" fill="#b2bcc6"/><rect x="12" y="13" width="2" height="2" fill="#3ad83a"/><rect x="12" y="13" width="2" height="1" fill="#a8e040"/><rect x="9" y="15" width="6" height="1" fill="#6c747c"/></svg>
<svg style="left:91px;top:124.69999999999999px" width="18" height="11" viewBox="0 0 18 11"><path d="M1.6 1.6L9 9L16.4 1.6" fill="none" stroke="#404040" stroke-width="3.6"/></svg>
<div class="t" style="left:164px;top:118px;letter-spacing:-0.67px">example.org</div>
<svg style="left:160px;top:148px" width="32" height="32" viewBox="0 0 16 16" shape-rendering="crispEdges"><rect x="3" y="1" width="10" height="1" fill="#bdbdbd"/><rect x="2" y="2" width="1" height="11" fill="#b4b4b4"/><rect x="3" y="2" width="9" height="11" fill="#fef8dc"/><rect x="3" y="7" width="9" height="6" fill="#fbefbe"/><rect x="3" y="10" width="9" height="3" fill="#f8e6a0"/><rect x="12" y="2" width="1" height="12" fill="#8e8e8e"/><rect x="13" y="2" width="2" height="3" fill="#a8965a"/><rect x="13" y="2" width="1" height="1" fill="#7c7c86"/><rect x="14" y="4" width="1" height="1" fill="#d8cc98"/><rect x="5" y="4" width="5" height="1" fill="#8a84a8"/><rect x="5" y="6" width="5" height="1" fill="#8a84a8"/><rect x="5" y="8" width="5" height="1" fill="#8a84a8"/><rect x="5" y="10" width="5" height="1" fill="#8a84a8"/><rect x="1" y="12" width="10" height="1" fill="#b9a86c"/><rect x="0" y="13" width="1" height="2" fill="#b9a86c"/><rect x="1" y="13" width="9" height="1" fill="#fffbea"/><rect x="1" y="14" width="9" height="1" fill="#f2d98c"/><rect x="10" y="13" width="1" height="2" fill="#8a8a8a"/><rect x="11" y="13" width="1" height="2" fill="#d0d0d0"/><rect x="12" y="14" width="1" height="1" fill="#8a8a8a"/><rect x="1" y="15" width="10" height="1" fill="#767676"/><rect x="0" y="8" width="8" height="8" fill="#8f8f8f"/><rect x="1" y="9" width="6" height="6" fill="#ffffff"/><rect x="2" y="10" width="4" height="3" fill="#2c2c9a"/><rect x="2" y="13" width="1" height="1" fill="#2c2c9a"/><rect x="5" y="13" width="1" height="1" fill="#2c2c9a"/><rect x="2" y="11" width="1" height="1" fill="#ffffff"/><rect x="2" y="12" width="1" height="1" fill="#9a9ad0"/></svg>
<div class="t" style="left:201px;top:154px;letter-spacing:-0.27px">Default Domain Policy</div>
<svg style="left:160px;top:184px" width="32" height="32" viewBox="0 0 16 16" shape-rendering="crispEdges"><rect x="1" y="2" width="14" height="12" fill="#cfab5e"/><rect x="2" y="3" width="12" height="10" fill="#f6d98e"/><rect x="2" y="3" width="1" height="10" fill="#fff0b8"/><rect x="2" y="3" width="5" height="1" fill="#fff0b8"/><rect x="7" y="1" width="8" height="3" fill="#cfab5e"/><rect x="8" y="2" width="6" height="1" fill="#e6c06a"/><rect x="9" y="2" width="2" height="1" fill="#ffffff"/><rect x="11" y="2" width="2" height="1" fill="#3d8ee8"/><rect x="8" y="4" width="6" height="1" fill="#c9ab6a"/><rect x="4" y="6" width="5" height="6" fill="#b08a30"/><rect x="4" y="6" width="5" height="1" fill="#9a7c38"/><rect x="5" y="7" width="3" height="3" fill="#e8d070"/><rect x="6" y="8" width="1" height="1" fill="#fffbe0"/><rect x="4" y="10" width="5" height="2" fill="#8a6410"/></svg>
<svg style="left:133px;top:193px" width="12" height="18" viewBox="0 0 12 18"><path d="M1.4 1.4L9 9L1.4 16.6" fill="none" stroke="#a6a6a6" stroke-width="3.8"/></svg>
<div class="t" style="left:201px;top:190px;letter-spacing:-0.17px">Domain Controllers</div>
<svg style="left:160px;top:220px" width="32" height="32" viewBox="0 0 16 16" shape-rendering="crispEdges"><rect x="0" y="2" width="14" height="12" fill="#cfab5e"/><rect x="1" y="3" width="12" height="10" fill="#f6d98e"/><rect x="1" y="3" width="1" height="10" fill="#fff0b8"/><rect x="1" y="3" width="5" height="1" fill="#fff0b8"/><rect x="6" y="1" width="8" height="3" fill="#cfab5e"/><rect x="7" y="2" width="6" height="1" fill="#e6c06a"/><rect x="8" y="2" width="2" height="1" fill="#ffffff"/><rect x="10" y="2" width="2" height="1" fill="#3d8ee8"/><rect x="7" y="4" width="6" height="1" fill="#c9ab6a"/><rect x="5" y="6" width="9" height="7" fill="#b0b4ba"/><rect x="6" y="7" width="7" height="6" fill="#fdf5d2"/><rect x="13" y="7" width="1" height="6" fill="#8c8c8c"/><rect x="14" y="7" width="1" height="3" fill="#a8975a"/><rect x="7" y="9" width="4" height="1" fill="#8a86a8"/><rect x="7" y="11" width="4" height="1" fill="#8a86a8"/><rect x="4" y="13" width="8" height="3" fill="#b8a86a"/><rect x="5" y="14" width="6" height="1" fill="#fffbe8"/><rect x="5" y="15" width="7" height="1" fill="#7a7a7a"/><rect x="12" y="13" width="2" height="3" fill="#9a9a9a"/></svg>
<svg style="left:129px;top:232.7px" width="18" height="11" viewBox="0 0 18 11"><path d="M1.6 1.6L9 9L16.4 1.6" fill="none" stroke="#404040" stroke-width="3.6"/></svg>
<div class="t" style="left:202px;top:226px;letter-spacing:-0.51px">Group Policy Objects</div>
<svg style="left:198px;top:256px" width="32" height="32" viewBox="0 0 16 16" shape-rendering="crispEdges"><rect x="3" y="1" width="10" height="1" fill="#bdbdbd"/><rect x="2" y="2" width="1" height="11" fill="#b4b4b4"/><rect x="3" y="2" width="9" height="11" fill="#fef8dc"/><rect x="3" y="7" width="9" height="6" fill="#fbefbe"/><rect x="3" y="10" width="9" height="3" fill="#f8e6a0"/><rect x="12" y="2" width="1" height="12" fill="#8e8e8e"/><rect x="13" y="2" width="2" height="3" fill="#a8965a"/><rect x="13" y="2" width="1" height="1" fill="#7c7c86"/><rect x="14" y="4" width="1" height="1" fill="#d8cc98"/><rect x="5" y="4" width="5" height="1" fill="#8a84a8"/><rect x="5" y="6" width="5" height="1" fill="#8a84a8"/><rect x="5" y="8" width="5" height="1" fill="#8a84a8"/><rect x="5" y="10" width="5" height="1" fill="#8a84a8"/><rect x="1" y="12" width="10" height="1" fill="#b9a86c"/><rect x="0" y="13" width="1" height="2" fill="#b9a86c"/><rect x="1" y="13" width="9" height="1" fill="#fffbea"/><rect x="1" y="14" width="9" height="1" fill="#f2d98c"/><rect x="10" y="13" width="1" height="2" fill="#8a8a8a"/><rect x="11" y="13" width="1" height="2" fill="#d0d0d0"/><rect x="12" y="14" width="1" height="1" fill="#8a8a8a"/><rect x="1" y="15" width="10" height="1" fill="#767676"/></svg>
<div class="t" style="left:239.2px;top:262px;letter-spacing:-0.27px">Default Domain C</div>
<svg style="left:198px;top:292px" width="32" height="32" viewBox="0 0 16 16" shape-rendering="crispEdges"><rect x="3" y="1" width="10" height="1" fill="#bdbdbd"/><rect x="2" y="2" width="1" height="11" fill="#b4b4b4"/><rect x="3" y="2" width="9" height="11" fill="#fef8dc"/><rect x="3" y="7" width="9" height="6" fill="#fbefbe"/><rect x="3" y="10" width="9" height="3" fill="#f8e6a0"/><rect x="12" y="2" width="1" height="12" fill="#8e8e8e"/><rect x="13" y="2" width="2" height="3" fill="#a8965a"/><rect x="13" y="2" width="1" height="1" fill="#7c7c86"/><rect x="14" y="4" width="1" height="1" fill="#d8cc98"/><rect x="5" y="4" width="5" height="1" fill="#8a84a8"/><rect x="5" y="6" width="5" height="1" fill="#8a84a8"/><rect x="5" y="8" width="5" height="1" fill="#8a84a8"/><rect x="5" y="10" width="5" height="1" fill="#8a84a8"/><rect x="1" y="12" width="10" height="1" fill="#b9a86c"/><rect x="0" y="13" width="1" height="2" fill="#b9a86c"/><rect x="1" y="13" width="9" height="1" fill="#fffbea"/><rect x="1" y="14" width="9" height="1" fill="#f2d98c"/><rect x="10" y="13" width="1" height="2" fill="#8a8a8a"/><rect x="11" y="13" width="1" height="2" fill="#d0d0d0"/><rect x="12" y="14" width="1" height="1" fill="#8a8a8a"/><rect x="1" y="15" width="10" height="1" fill="#767676"/></svg>
<div class="t" style="left:239.2px;top:298px;letter-spacing:-0.27px">Default Domain Policy</div>
<svg style="left:160px;top:328px" width="32" height="32" viewBox="0 0 16 16" shape-rendering="crispEdges"><rect x="0" y="2" width="14" height="12" fill="#cfab5e"/><rect x="1" y="3" width="12" height="10" fill="#f6d98e"/><rect x="1" y="3" width="1" height="10" fill="#fff0b8"/><rect x="1" y="3" width="5" height="1" fill="#fff0b8"/><rect x="6" y="1" width="8" height="3" fill="#cfab5e"/><rect x="7" y="2" width="6" height="1" fill="#e6c06a"/><rect x="8" y="2" width="2" height="1" fill="#ffffff"/><rect x="10" y="2" width="2" height="1" fill="#3d8ee8"/><rect x="7" y="4" width="6" height="1" fill="#c9ab6a"/><rect x="8" y="5" width="8" height="4" fill="#b8b8c0"/><rect x="9" y="6" width="6" height="3" fill="#fdfbf0"/><rect x="10" y="7" width="4" height="1" fill="#8a86a8"/><rect x="7" y="9" width="9" height="2" fill="#4e7490"/><rect x="8" y="10" width="4" height="1" fill="#b8dcf4"/><rect x="12" y="10" width="3" height="1" fill="#6e90a8"/><rect x="8" y="11" width="7" height="1" fill="#5a7e98"/><rect x="9" y="11" width="2" height="1" fill="#d8ecf8"/><rect x="9" y="12" width="5" height="1" fill="#4e6e88"/><rect x="10" y="13" width="3" height="3" fill="#6e8ea6"/><rect x="11" y="13" width="1" height="3" fill="#9ab8cc"/></svg>
<svg style="left:133px;top:337px" width="12" height="18" viewBox="0 0 12 18"><path d="M1.4 1.4L9 9L1.4 16.6" fill="none" stroke="#a6a6a6" stroke-width="3.8"/></svg>
<div class="t" style="left:202.8px;top:334px;letter-spacing:-0.49px">WMI Filters</div>
<svg style="left:160px;top:364px" width="32" height="32" viewBox="0 0 16 16" shape-rendering="crispEdges"><rect x="0" y="1" width="14" height="12" fill="#cfab5e"/><rect x="1" y="2" width="12" height="10" fill="#f6d98e"/><rect x="1" y="2" width="1" height="10" fill="#fff0b8"/><rect x="1" y="2" width="5" height="1" fill="#fff0b8"/><rect x="6" y="0" width="8" height="3" fill="#cfab5e"/><rect x="7" y="1" width="6" height="1" fill="#e6c06a"/><rect x="8" y="1" width="2" height="1" fill="#ffffff"/><rect x="10" y="1" width="2" height="1" fill="#3d8ee8"/><rect x="7" y="3" width="6" height="1" fill="#c9ab6a"/><rect x="5" y="3" width="10" height="2" fill="#a86a4e"/><rect x="5" y="3" width="10" height="1" fill="#c8906e"/><rect x="15" y="4" width="1" height="3" fill="#7a3a20"/><rect x="5" y="5" width="11" height="11" fill="#6e7680"/><rect x="6" y="5" width="9" height="10" fill="#e6eef6"/><rect x="6" y="5" width="2" height="10" fill="#ffffff"/><rect x="8" y="6" width="5" height="8" fill="#6f8fb4"/><rect x="9" y="6" width="3" height="7" fill="#cfe6ff"/><rect x="10" y="9" width="2" height="1" fill="#2e5a96"/><rect x="10" y="11" width="2" height="1" fill="#2e5a96"/><rect x="8" y="14" width="5" height="1" fill="#94c4f0"/></svg>
<svg style="left:133px;top:373px" width="12" height="18" viewBox="0 0 12 18"><path d="M1.4 1.4L9 9L1.4 16.6" fill="none" stroke="#a6a6a6" stroke-width="3.8"/></svg>
<div class="t" style="left:201.8px;top:370px;letter-spacing:-1.23px">Starter GPOs</div>
<svg style="left:84px;top:400px" width="32" height="32" viewBox="0 0 16 16" shape-rendering="crispEdges"><rect x="0" y="2" width="14" height="12" fill="#cfab5e"/><rect x="1" y="3" width="12" height="10" fill="#f6d98e"/><rect x="1" y="3" width="1" height="10" fill="#fff0b8"/><rect x="1" y="3" width="5" height="1" fill="#fff0b8"/><rect x="6" y="1" width="8" height="3" fill="#cfab5e"/><rect x="7" y="2" width="6" height="1" fill="#e6c06a"/><rect x="8" y="2" width="2" height="1" fill="#ffffff"/><rect x="10" y="2" width="2" height="1" fill="#3d8ee8"/><rect x="7" y="4" width="6" height="1" fill="#c9ab6a"/><rect x="7" y="6" width="9" height="10" fill="#1f7ad6"/><rect x="8" y="7" width="3" height="2" fill="#e4f6ff"/><rect x="12" y="7" width="3" height="2" fill="#9fd6f4"/><rect x="8" y="10" width="3" height="2" fill="#e4f6ff"/><rect x="12" y="10" width="3" height="2" fill="#8ecaea"/><rect x="7" y="13" width="1" height="3" fill="#0a2a9a"/><rect x="8" y="14" width="2" height="2" fill="#64b0dc"/><rect x="10" y="13" width="5" height="1" fill="#d0f0ff"/><rect x="10" y="14" width="1" height="2" fill="#d0f0ff"/><rect x="11" y="14" width="3" height="2" fill="#0a3ab8"/></svg>
<svg style="left:57px;top:409px" width="12" height="18" viewBox="0 0 12 18"><path d="M1.4 1.4L9 9L1.4 16.6" fill="none" stroke="#a6a6a6" stroke-width="3.8"/></svg>
<div class="t" style="left:126.30000000000001px;top:406px;letter-spacing:-1.57px">Sites</div>
<svg style="left:84px;top:436px" width="32" height="32" viewBox="0 0 16 16" shape-rendering="crispEdges"><rect x="2" y="1" width="8" height="8" fill="#cfab5e"/><rect x="3" y="2" width="6" height="6" fill="#f6d98e"/><rect x="6" y="0" width="4" height="2" fill="#cfab5e"/><rect x="7" y="1" width="2" height="1" fill="#fff0b8"/><rect x="9" y="2" width="7" height="7" fill="#b0b0b0"/><rect x="10" y="3" width="5" height="4" fill="#8aaaf0"/><rect x="10" y="3" width="2" height="4" fill="#0000c8"/><rect x="12" y="5" width="2" height="2" fill="#ffffff"/><rect x="13" y="5" width="1" height="1" fill="#101040"/><rect x="6" y="4" width="3" height="5" fill="#a8a8a8"/><rect x="7" y="5" width="1" height="1" fill="#404040"/><rect x="7" y="6" width="1" height="1" fill="#30e030"/><rect x="4" y="7" width="10" height="8" fill="#c0c0b8"/><rect x="5" y="8" width="8" height="6" fill="#5a78f0"/><rect x="5" y="8" width="3" height="6" fill="#0008c0"/><rect x="8" y="9" width="3" height="4" fill="#a8a8a8"/><rect x="8" y="9" width="2" height="4" fill="#ffffff"/><rect x="9" y="9" width="1" height="1" fill="#101040"/><rect x="6" y="15" width="6" height="1" fill="#c4c4c4"/><rect x="0" y="8" width="4" height="8" fill="#a4a4a4"/><rect x="1" y="9" width="2" height="1" fill="#404040"/><rect x="1" y="10" width="2" height="1" fill="#30e030"/><rect x="1" y="11" width="2" height="4" fill="#d4d4d4"/></svg>
<div class="t" style="left:126.30000000000001px;top:442px;letter-spacing:-0.07px">Group Policy Modeling</div>
<svg style="left:84px;top:472px" width="32" height="32" viewBox="0 0 16 16" shape-rendering="crispEdges"><rect x="0" y="2" width="14" height="12" fill="#cfab5e"/><rect x="1" y="3" width="12" height="10" fill="#f6d98e"/><rect x="1" y="3" width="1" height="10" fill="#fff0b8"/><rect x="1" y="3" width="5" height="1" fill="#fff0b8"/><rect x="6" y="1" width="8" height="3" fill="#cfab5e"/><rect x="7" y="2" width="6" height="1" fill="#e6c06a"/><rect x="8" y="2" width="2" height="1" fill="#ffffff"/><rect x="10" y="2" width="2" height="1" fill="#3d8ee8"/><rect x="7" y="4" width="6" height="1" fill="#c9ab6a"/><rect x="7" y="6" width="6" height="10" fill="#a8a8a8"/><rect x="7" y="8" width="9" height="8" fill="#8c8c8c"/><rect x="8" y="7" width="4" height="8" fill="#ffffff"/><rect x="8" y="9" width="7" height="6" fill="#ffffff"/><rect x="12" y="6" width="1" height="2" fill="#b0b0b0"/><rect x="13" y="7" width="1" height="1" fill="#c8c8c8"/><rect x="14" y="7" width="1" height="1" fill="#e0e0e0"/><rect x="7" y="15" width="9" height="1" fill="#7a7a7a"/><rect x="9" y="9" width="1" height="2" fill="#3a7ab8"/><rect x="10" y="10" width="1" height="1" fill="#0a4aa0"/><rect x="11" y="8" width="1" height="2" fill="#5aaad8"/><rect x="10" y="9" width="1" height="1" fill="#9ccbe8"/><rect x="10" y="11" width="1" height="1" fill="#4a8ac0"/><rect x="11" y="10" width="1" height="1" fill="#8cc0e0"/><rect x="12" y="10" width="2" height="1" fill="#8a86a8"/><rect x="12" y="13" width="2" height="1" fill="#8a86a8"/><rect x="10" y="12" width="2" height="2" fill="#c4c4c4"/><rect x="9" y="12" width="1" height="2" fill="#e8e8e8"/></svg>
<div class="t" style="left:126.30000000000001px;top:478px;letter-spacing:-0.64px">Group Policy Results</div>
</div>
<div class="a" style="left:6px;top:975px;width:444px;height:33px;background:#f0f0f0"></div>
<div class="a" style="left:40px;top:975px;width:280px;height:33px;background:#cdcdcd"></div>
<svg style="left:17px;top:985px" width="10" height="12" viewBox="0 0 10 12"><path d="M8 1L3 6L8 11" fill="none" stroke="#606060" stroke-width="2.6"/></svg>
<div class="a" style="left:2px;top:1012px;width:1528px;height:1px;background:#d7d7d7"></div>
<div class="t" style="left:5.6px;top:1026px;letter-spacing:-0.39px;">Open the GPO editor</div>
<div class="a" style="left:1089px;top:1016px;width:1px;height:41px;background:#d7d7d7"></div>
<div class="a" style="left:1355px;top:1016px;width:1px;height:41px;background:#d7d7d7"></div>
<div class="a" style="left:1525px;top:1016px;width:1px;height:41px;background:#d7d7d7"></div>
<div class="a" style="left:1528px;top:154px;width:2px;height:904px;background:#fff"></div>
<div class="a" style="left:452px;top:1010px;width:1078px;height:2px;background:#fff"></div>
<div class="a" style="left:458px;top:166px;width:1070px;height:844px;border-top:2px solid #a0a0a0;border-left:2px solid #a0a0a0;border-right:2px solid #e3e3e3;border-bottom:2px solid #e3e3e3"></div>
<div class="a" style="left:460px;top:168px;width:1067px;height:841px;border-top:2px solid #696969;border-left:2px solid #696969"></div>
<div class="t" style="left:468px;top:179px;font-size:28px;line-height:28px;font-weight:bold;letter-spacing:-0.18px;">Group Policy Management</div>
<div class="a" style="left:468px;top:256px;width:1050px;height:745px;background:#fff;border:1px solid #d9d9d9"></div>
<div class="a" style="left:468px;top:216px;width:116px;height:42px;background:#fff;border:1px solid #d9d9d9;border-bottom:none"></div>
<div class="t" style="left:483.9px;top:225px;font-size:22px;line-height:22px;letter-spacing:-0.1px;">Contents</div>
<div class="a" style="left:486px;top:270px;width:1016px;height:714px;border:2px solid #6d7682"></div>
<div class="t" style="left:501.8px;top:287px;font-size:22px;line-height:22px;letter-spacing:-0.07px;">Name</div>
<svg style="left:664px;top:275px" width="14" height="8" viewBox="0 0 14 8"><path d="M0.5 7.5L7 1L13.5 7.5" fill="none" stroke="#5a5a5a" stroke-width="1.2"/></svg>
<div class="a" style="left:851px;top:274px;width:1px;height:48px;background:#e5e5e5"></div>
<div class="a" style="left:530px;top:322px;width:321px;height:34px;background:#f0f0f0"></div>
<svg style="left:498px;top:322px" width="32" height="32" viewBox="0 0 16 16" shape-rendering="crispEdges"><rect x="7" y="0" width="2" height="1" fill="#b6d2ec"/><rect x="7" y="0" width="1" height="1" fill="#7aa0c2"/><rect x="8" y="0" width="1" height="1" fill="#3e6282"/><rect x="7" y="1" width="2" height="1" fill="#b6d2ec"/><rect x="7" y="1" width="1" height="1" fill="#7aa0c2"/><rect x="8" y="1" width="1" height="1" fill="#3e6282"/><rect x="6" y="2" width="4" height="1" fill="#b6d2ec"/><rect x="6" y="2" width="1" height="1" fill="#7aa0c2"/><rect x="9" y="2" width="1" height="1" fill="#3e6282"/><rect x="6" y="3" width="4" height="1" fill="#b6d2ec"/><rect x="6" y="3" width="1" height="1" fill="#7aa0c2"/><rect x="9" y="3" width="1" height="1" fill="#3e6282"/><rect x="5" y="4" width="6" height="1" fill="#b6d2ec"/><rect x="5" y="4" width="1" height="1" fill="#7aa0c2"/><rect x="10" y="4" width="1" height="1" fill="#3e6282"/><rect x="5" y="5" width="6" height="1" fill="#b6d2ec"/><rect x="5" y="5" width="1" height="1" fill="#7aa0c2"/><rect x="10" y="5" width="1" height="1" fill="#3e6282"/><rect x="4" y="6" width="8" height="1" fill="#b6d2ec"/><rect x="4" y="6" width="1" height="1" fill="#7aa0c2"/><rect x="11" y="6" width="1" height="1" fill="#3e6282"/><rect x="4" y="7" width="8" height="1" fill="#b6d2ec"/><rect x="4" y="7" width="1" height="1" fill="#7aa0c2"/><rect x="11" y="7" width="1" height="1" fill="#3e6282"/><rect x="3" y="8" width="10" height="1" fill="#b6d2ec"/><rect x="3" y="8" width="1" height="1" fill="#7aa0c2"/><rect x="12" y="8" width="1" height="1" fill="#3e6282"/><rect x="3" y="9" width="10" height="1" fill="#b6d2ec"/><rect x="3" y="9" width="1" height="1" fill="#7aa0c2"/><rect x="12" y="9" width="1" height="1" fill="#3e6282"/><rect x="2" y="10" width="12" height="1" fill="#b6d2ec"/><rect x="2" y="10" width="1" height="1" fill="#7aa0c2"/><rect x="13" y="10" width="1" height="1" fill="#3e6282"/><rect x="2" y="11" width="12" height="1" fill="#b6d2ec"/><rect x="2" y="11" width="1" height="1" fill="#7aa0c2"/><rect x="13" y="11" width="1" height="1" fill="#3e6282"/><rect x="1" y="12" width="14" height="1" fill="#b6d2ec"/><rect x="1" y="12" width="1" height="1" fill="#7aa0c2"/><rect x="14" y="12" width="1" height="1" fill="#3e6282"/><rect x="1" y="13" width="14" height="1" fill="#b6d2ec"/><rect x="1" y="13" width="1" height="1" fill="#7aa0c2"/><rect x="14" y="13" width="1" height="1" fill="#3e6282"/><rect x="0" y="14" width="16" height="1" fill="#b6d2ec"/><rect x="0" y="14" width="1" height="1" fill="#7aa0c2"/><rect x="15" y="14" width="1" height="1" fill="#3e6282"/><rect x="0" y="15" width="16" height="1" fill="#b6d2ec"/><rect x="0" y="15" width="1" height="1" fill="#7aa0c2"/><rect x="15" y="15" width="1" height="1" fill="#3e6282"/><rect x="4" y="7" width="8" height="1" fill="#4a6e8e"/><rect x="5" y="8" width="6" height="1" fill="#ffffff"/><rect x="5" y="9" width="6" height="1" fill="#ffffff"/><rect x="6" y="10" width="4" height="1" fill="#ffffff"/><rect x="6" y="11" width="4" height="1" fill="#ffffff"/><rect x="7" y="12" width="2" height="1" fill="#ffffff"/><rect x="7" y="13" width="2" height="1" fill="#ffffff"/><rect x="4" y="8" width="1" height="1" fill="#3e6282"/><rect x="11" y="8" width="1" height="1" fill="#7aa0c2"/><rect x="4" y="9" width="1" height="1" fill="#3e6282"/><rect x="11" y="9" width="1" height="1" fill="#7aa0c2"/><rect x="5" y="10" width="1" height="1" fill="#3e6282"/><rect x="10" y="10" width="1" height="1" fill="#7aa0c2"/><rect x="5" y="11" width="1" height="1" fill="#3e6282"/><rect x="10" y="11" width="1" height="1" fill="#7aa0c2"/><rect x="6" y="12" width="1" height="1" fill="#3e6282"/><rect x="9" y="12" width="1" height="1" fill="#7aa0c2"/><rect x="6" y="13" width="1" height="1" fill="#3e6282"/><rect x="9" y="13" width="1" height="1" fill="#7aa0c2"/><rect x="7" y="14" width="1" height="1" fill="#3e6282"/><rect x="8" y="14" width="1" height="1" fill="#7aa0c2"/><rect x="0" y="15" width="16" height="1" fill="#3e6282"/></svg>
<div class="t" style="left:533.5px;top:329px;font-size:22px;line-height:22px;letter-spacing:-0.51px;">Forest: example.org</div>
<div class="a" style="left:400px;top:438px;width:428px;height:596px;background:#f2f2f2;border:1px solid #cccccc"></div>
<div class="a" style="left:406px;top:444px;width:56px;height:584px;background:#f0f0f0"></div>
<div class="a" style="left:406px;top:444px;width:416px;height:44px;background:#91c9f7"></div>
<div class="t" style="left:468.8px;top:456px;letter-spacing:-0.07px;">Edit</div>
<div class="t" style="left:508.8px;top:456px;letter-spacing:-2.4px;">...</div>
<div class="t" style="left:469.8px;top:500px;letter-spacing:-1.26px;">GPO Status</div>
<div class="t" style="left:468.8px;top:558px;letter-spacing:-1.25px;">Back Up</div>
<div class="t" style="left:552.5px;top:558px;letter-spacing:-2.4px;">...</div>
<div class="t" style="left:468.8px;top:602px;letter-spacing:-0.48px;">Restore from Backup</div>
<div class="t" style="left:684.8px;top:602px;letter-spacing:-2.4px;">...</div>
<div class="t" style="left:468.8px;top:646px;letter-spacing:-0.06px;">Import Settings</div>
<div class="t" style="left:628.7px;top:646px;letter-spacing:-2.4px;">...</div>
<div class="t" style="left:469.8px;top:690px;letter-spacing:-0.98px;">Save Report</div>
<div class="t" style="left:592.6px;top:690px;letter-spacing:-2.4px;">...</div>
<div class="t" style="left:468.8px;top:748px;letter-spacing:-0.14px;">New Window from Here</div>
<div class="t" style="left:469.8px;top:806px;letter-spacing:-0.7px;">Copy</div>
<div class="t" style="left:468.8px;top:850px;letter-spacing:-0.08px;">Delete</div>
<div class="t" style="left:468.8px;top:894px;letter-spacing:-0.9px;">Rename</div>
<div class="t" style="left:468.8px;top:938px;letter-spacing:-0.82px;">Refresh</div>
<div class="t" style="left:468.8px;top:996px;letter-spacing:-0.1px;">Help</div>
<div class="a" style="left:462px;top:536px;width:360px;height:1px;background:#d7d7d7"></div>
<div class="a" style="left:462px;top:726px;width:360px;height:1px;background:#d7d7d7"></div>
<div class="a" style="left:462px;top:784px;width:360px;height:1px;background:#d7d7d7"></div>
<div class="a" style="left:462px;top:974px;width:360px;height:1px;background:#d7d7d7"></div>
<svg style="left:795px;top:503px" width="8" height="12" viewBox="0 0 8 12"><path d="M1 0.7L6.5 6L1 11.3" fill="none" stroke="#333" stroke-width="1.5"/></svg>
<div class="a" style="left:0;top:0;width:1532px;height:1060px;border:2px solid #3b3a56"></div>
</body></html>
